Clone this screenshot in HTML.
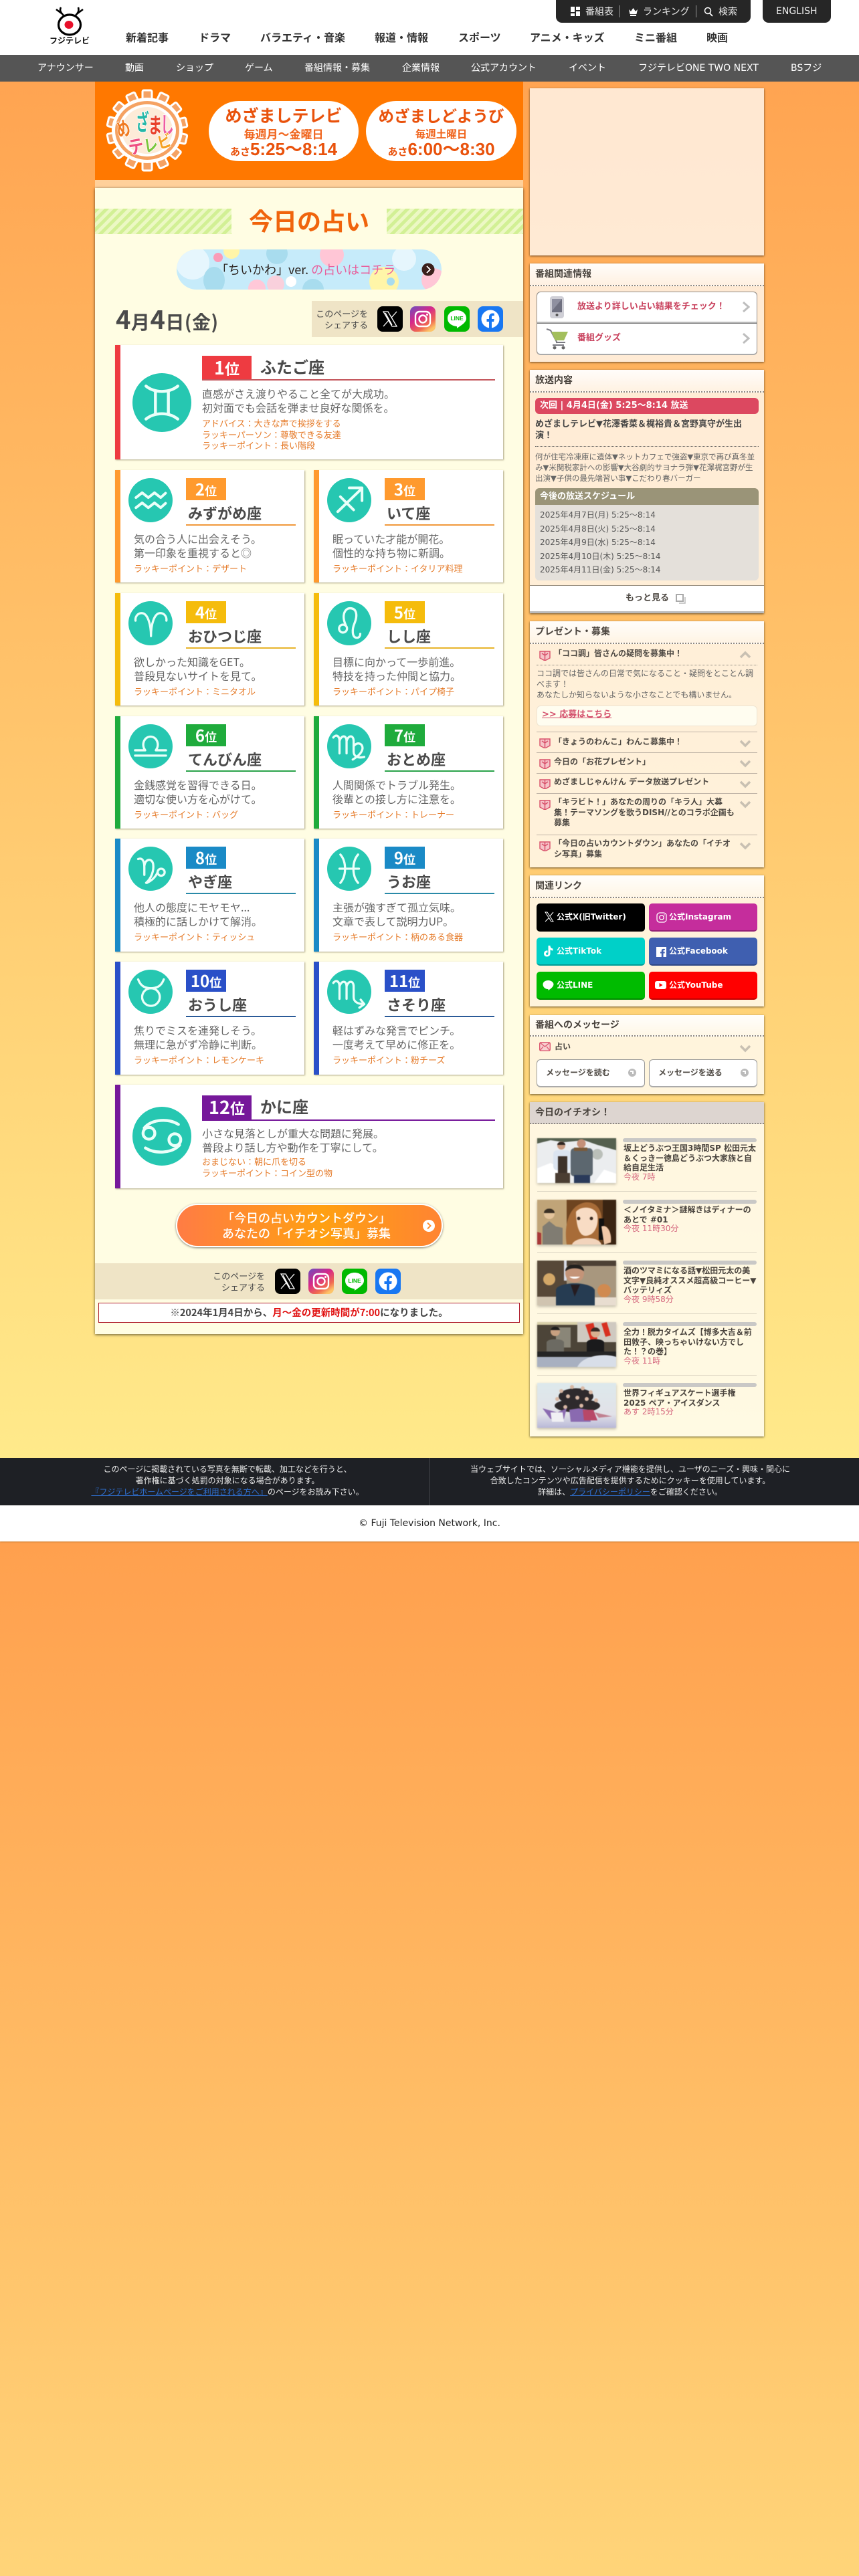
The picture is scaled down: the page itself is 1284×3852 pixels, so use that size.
<!DOCTYPE html>
<html lang="ja"><head><meta charset="utf-8"><title>今日の占い</title>
<style>
html{background:linear-gradient(#ffa04e,#ffee8e) 0 0/100% 2305px repeat-y}
body{margin:0;position:relative;width:1284px;height:3852px;overflow:hidden;font-family:"DejaVu Sans","Noto Sans CJK JP",sans-serif;color:#444}
.a,.c,.bx{position:absolute}
.a{white-space:nowrap}
.no{font-family:"Noto Sans CJK JP","DejaVu Sans",sans-serif}
.nv{top:43px;font:bold 16px/24px "Noto Sans CJK JP",sans-serif;color:#333}
.sn{top:91px;font:14px/22px "DejaVu Sans","Noto Sans CJK JP",sans-serif;color:#fff}
.tp{top:6px;font:14px/22px "Noto Sans CJK JP",sans-serif;color:#eee}
.c{background:#fff;border-left:8px solid var(--k);box-sizing:border-box;box-shadow:1px 1px 2px rgba(90,80,40,.5);font-family:"Noto Sans CJK JP",sans-serif}
.s{width:283px;height:168px}
.g{left:172px;width:580px}
.c svg{position:absolute;border-radius:50%;background:#26c7b1}
.c svg path,.c svg circle{fill:none;stroke:#eafff9;stroke-width:5;stroke-linecap:round;stroke-linejoin:round}
.s svg{left:12px;top:12px;width:66px;height:66px}
.g svg{left:18px;width:88px;height:88px}
.b{position:absolute;background:var(--k);color:#fff;text-align:center;font-weight:bold;font-size:18px}
.b i{font-style:normal;font-size:24px}
.s .b{left:98px;top:12px;width:60px;height:33px;line-height:31px}
.g .b{left:122px;top:16px;width:74px;height:35px;line-height:34px;font-size:22px}
.g .b i{font-size:27px}
.n{position:absolute;font-weight:bold;font-size:22px;line-height:30px;color:#4a4a4a;white-space:nowrap}
.s .n{left:101px;top:49px}
.g .n{left:209px;top:14px;font-size:24px;line-height:36px}
.u{position:absolute;height:2px;background:var(--u)}
.s .u{left:98px;top:81px;width:164px}
.g .u{left:122px;top:51px;width:438px}
.d{position:absolute;font-size:16px;line-height:21px;color:#666;white-space:nowrap}
.s .d{left:20px;top:92px}
.g .d{left:122px;top:62px}
.l{position:absolute;font-size:13px;line-height:16.5px;color:#e57a28;white-space:nowrap}
.s .l{left:20px;top:139px}
.g .l{left:122px;top:109px}
.bx{left:792px;width:350px;background:rgba(255,255,255,.74);box-shadow:0 1px 3px rgba(0,0,0,.6)}
.tt{position:absolute;left:0;top:0;width:350px;height:32px;border-bottom:2px dotted #8d8780;box-sizing:content-box;background:linear-gradient(rgba(255,255,255,.9),rgba(255,255,255,.3));font-size:14px;font-weight:bold;line-height:33px;text-indent:8px;color:#4a443e}
.b13{font-size:13px;font-weight:bold;line-height:16px;color:#4f4a44}
.b12{font-size:12px;font-weight:bold;line-height:16px;color:#4f4a44}
.sep{position:absolute;left:802px;width:330px;height:1px;background:#bfb3a6}
.sb{position:absolute;width:162px;height:42px;border-radius:5px;box-sizing:border-box;border-bottom:2px solid rgba(0,0,0,.25)}
.sb span{position:absolute;left:30px;top:12px;font-size:12px;font-weight:bold;line-height:16px;color:#fff;white-space:nowrap}
.sb svg{position:absolute;left:10px;top:10px}
.ms{position:absolute;top:1584px;width:162px;height:42px;border:1px solid #999;border-bottom:2px solid #aaa;border-radius:6px;background:#fff;box-sizing:border-box}
.ms span{position:absolute;left:13px;top:11px;font-size:12px;font-weight:bold;line-height:16px;color:#4f4a44;white-space:nowrap}
.ms i{position:absolute;left:136px;top:13px;width:12px;height:12px;border-radius:50%;background:#bbb}
.ms i:after{content:"";position:absolute;left:3px;top:3px;width:5px;height:5px;border-top:2px solid #fff;border-right:2px solid #fff;box-sizing:border-box}
.th{position:absolute;left:803px;width:118px;height:67px;box-shadow:0 2px 4px rgba(0,0,0,.25);filter:blur(.5px)}
.gb{position:absolute;left:931px;width:200px;height:6px;background:#c9c8c6;border-radius:3px}
.it{position:absolute;left:932px;font-size:12px;font-weight:bold;line-height:14.6px;color:#4a443e;white-space:nowrap}
.tm{position:absolute;left:932px;font-size:12px;line-height:15px;color:#d4647c;white-space:nowrap}
.hr{position:absolute;left:803px;width:328px;height:1px;background:#ddd6c4}
</style></head><body>

<!-- header -->
<div class="a" style="left:0;top:0;width:1284px;height:82px;background:#fff"></div>
<svg class="a" style="left:72px;top:8px" width="64" height="60" viewBox="0 0 64 60"><path d="M23 15C18 10 17 7 19 3M20 12 12 6M41 15C46 10 46 7 45 3M44 12 52 6" fill="none" stroke="#000" stroke-width="2.6"/><ellipse cx="32" cy="29" rx="16.5" ry="15" fill="#fff" stroke="#000" stroke-width="3.2"/><ellipse cx="31" cy="29" rx="6.5" ry="6" fill="#e8102a"/><text x="32" y="57" text-anchor="middle" font-size="12" font-weight="bold" font-family="Noto Sans CJK JP" fill="#111">フジテレビ</text></svg>
<div class="a nv" style="left:188px">新着記事</div>
<div class="a nv" style="left:297px">ドラマ</div>
<div class="a nv" style="left:389px">バラエティ・音楽</div>
<div class="a nv" style="left:560px">報道・情報</div>
<div class="a nv" style="left:685px">スポーツ</div>
<div class="a nv" style="left:792px">アニメ・キッズ</div>
<div class="a nv" style="left:948px">ミニ番組</div>
<div class="a nv" style="left:1056px">映画</div>

<div class="a" style="left:831px;top:0;width:291px;height:34px;background:#262626;border-radius:0 0 9px 9px"></div>
<div class="a" style="left:1140px;top:0;width:102px;height:34px;background:#262626;border-radius:0 0 9px 9px"></div>
<svg class="a" style="left:853px;top:10px" width="15" height="14"><path d="M0 0h6v8H0zM8 0h6v5H8zM0 10h6v4H0zM8 7h6v7H8z" fill="#fff"/></svg>
<div class="a tp" style="left:875px">番組表</div>
<div class="a" style="left:926px;top:8px;width:1px;height:18px;background:#999"></div>
<svg class="a" style="left:939px;top:11px" width="15" height="13"><path d="M1 3l3 3 3.500-5 3.500 5 3-3-1.500 7H2.500zM3 11h9v2H3z" fill="#fff"/></svg>
<div class="a tp" style="left:961px">ランキング</div>
<div class="a" style="left:1040px;top:8px;width:1px;height:18px;background:#999"></div>
<svg class="a" style="left:1052px;top:10px" width="15" height="15"><circle cx="6" cy="6" r="4.500" fill="none" stroke="#fff" stroke-width="1.500"/><path d="M9 10l4 4" stroke="#fff" stroke-width="1.800"/></svg>
<div class="a tp" style="left:1074px">検索</div>
<div class="a" style="left:1160px;top:6px;font-size:14px;line-height:22px;color:#eee">ENGLISH</div>

<div class="a" style="left:0;top:82px;width:1284px;height:40px;background:#555"></div>
<div class="a sn" style="left:56px">アナウンサー</div>
<div class="a sn" style="left:187px">動画</div>
<div class="a sn" style="left:263px">ショップ</div>
<div class="a sn" style="left:366px">ゲーム</div>
<div class="a sn" style="left:455px">番組情報・募集</div>
<div class="a sn" style="left:601px">企業情報</div>
<div class="a sn" style="left:704px">公式アカウント</div>
<div class="a sn" style="left:850px">イベント</div>
<div class="a sn" style="left:954px">フジテレビONE TWO NEXT</div>
<div class="a sn" style="left:1182px">BSフジ</div>

<!-- banner -->
<div class="a" style="left:142px;top:122px;width:640px;height:147px;background:#ff7800"></div>
<div class="a" style="left:142px;top:269px;width:640px;height:12px;background:#ffd09a"></div>
<svg class="a" style="left:153px;top:133px" width="134" height="124" viewBox="0 0 134 124">
<g fill="#f5a263" stroke="#fff" stroke-width="3">
<rect x="60" y="2" width="14" height="20" rx="2"/>
<rect x="60" y="2" width="14" height="20" rx="2" transform="rotate(26 67 62)"/>
<rect x="60" y="2" width="14" height="20" rx="2" transform="rotate(52 67 62)"/>
<rect x="60" y="2" width="14" height="20" rx="2" transform="rotate(78 67 62)"/>
<rect x="60" y="2" width="14" height="20" rx="2" transform="rotate(103 67 62)"/>
<rect x="60" y="2" width="14" height="20" rx="2" transform="rotate(129 67 62)"/>
<rect x="60" y="2" width="14" height="20" rx="2" transform="rotate(155 67 62)"/>
<rect x="60" y="2" width="14" height="20" rx="2" transform="rotate(180 67 62)"/>
<rect x="60" y="2" width="14" height="20" rx="2" transform="rotate(206 67 62)"/>
<rect x="60" y="2" width="14" height="20" rx="2" transform="rotate(232 67 62)"/>
<rect x="60" y="2" width="14" height="20" rx="2" transform="rotate(258 67 62)"/>
<rect x="60" y="2" width="14" height="20" rx="2" transform="rotate(283 67 62)"/>
<rect x="60" y="2" width="14" height="20" rx="2" transform="rotate(309 67 62)"/>
<rect x="60" y="2" width="14" height="20" rx="2" transform="rotate(335 67 62)"/>
</g>
<ellipse cx="67" cy="62" rx="53" ry="49" fill="#fff"/><ellipse cx="67" cy="62" rx="48" ry="44" fill="#f5a263"/><ellipse cx="67" cy="62" rx="43" ry="39" fill="#fff"/><ellipse cx="67" cy="62" rx="38" ry="35" fill="#fdebd8"/>
<g font-family="Noto Sans CJK JP" font-weight="bold" stroke="#fff" stroke-width="1.500" paint-order="stroke" text-anchor="middle">
<text font-size="25" fill="#f07a20" transform="translate(34 70) rotate(-15) scale(.8 1.2)">め</text>
<text font-size="26" fill="#26b8a8" transform="translate(60 62) scale(.75 1.3)">ざ</text>
<text font-size="26" fill="#e8402a" transform="translate(79 66) scale(.8 1.25)">ま</text>
<text font-size="26" fill="#ef5ca0" transform="translate(97 66) scale(.75 1.3)">し</text>
<text font-size="24" fill="#ef4f80" transform="translate(52 96) rotate(-10) scale(.95 1.15)">テ</text>
<text font-size="22" fill="#7bc63c" transform="translate(74 93) rotate(-10) scale(.95 1.15)">レ</text>
<text font-size="22" fill="#f5a020" transform="translate(95 87) rotate(-15) scale(.95 1.1)">ビ</text>
</g></svg>
<div class="a" style="left:312px;top:151px;width:224px;height:90px;border-radius:45px;background:#fff"></div>
<div class="a" style="left:547px;top:151px;width:225px;height:90px;border-radius:45px;background:#fff"></div>
<div class="a no" style="left:312px;width:224px;top:155px;text-align:center;font-size:25px;font-weight:bold;line-height:34px;color:#e9520c">めざましテレビ</div>
<div class="a no" style="left:312px;width:224px;top:188px;text-align:center;font-size:17px;font-weight:bold;line-height:24px;color:#f0641c">毎週月〜金曜日</div>
<div class="a no" style="left:312px;width:224px;top:206px;text-align:center;font-size:15px;font-weight:bold;line-height:34px;color:#e9520c">あさ<span style="font-size:26px;font-family:'Liberation Sans','Noto Sans CJK JP'">5:25〜8:14</span></div>
<div class="a no" style="left:547px;width:225px;top:155px;text-align:center;font-size:23.500px;font-weight:bold;line-height:34px;color:#e9520c">めざましどようび</div>
<div class="a no" style="left:547px;width:225px;top:188px;text-align:center;font-size:15.500px;font-weight:bold;line-height:24px;color:#f0641c">毎週土曜日</div>
<div class="a no" style="left:547px;width:225px;top:206px;text-align:center;font-size:15px;font-weight:bold;line-height:34px;color:#e9520c">あさ<span style="font-size:26px;font-family:'Liberation Sans','Noto Sans CJK JP'">6:00〜8:30</span></div>

<!-- main card -->
<div class="a" style="left:142px;top:281px;width:640px;height:1714px;background:#fffde3;box-shadow:0 1px 4px rgba(0,0,0,.6)"></div>
<div class="a" style="left:142px;top:312px;width:204px;height:38px;background:repeating-linear-gradient(135deg,#d2f095 0 5px,#ecf8c4 5px 10px)"></div>
<div class="a" style="left:578px;top:312px;width:204px;height:38px;background:repeating-linear-gradient(135deg,#d2f095 0 5px,#ecf8c4 5px 10px)"></div>
<div class="a no" style="left:142px;width:640px;top:304px;text-align:center;font-size:36px;font-weight:bold;line-height:50px;color:#f0640c">今日の占い</div>

<!-- chiikawa banner -->
<svg class="a" style="left:264px;top:373px" width="396" height="60" viewBox="0 0 396 60"><defs><clipPath id="cb"><rect width="396" height="60" rx="30"/></clipPath></defs><g clip-path="url(#cb)"><rect width="396" height="60" fill="#c6ebfa"/><circle cx="24" cy="20" r="25" fill="#e6f6fd"/><circle cx="82" cy="2" r="12" fill="#fff5a8"/><circle cx="148" cy="52" r="13" fill="#f9d0dc"/><ellipse cx="56" cy="46" rx="16" ry="20" fill="#a8dcee"/><circle cx="120" cy="58" r="13" fill="#ffc8d8"/><circle cx="204" cy="60" r="16" fill="#a8dcee"/><circle cx="232" cy="8" r="18" fill="#ffc6d6"/><circle cx="150" cy="6" r="16" fill="#a8dcee"/><circle cx="310" cy="48" r="22" fill="#fff5a8"/><circle cx="340" cy="14" r="18" fill="#e6f6fd"/><circle cx="384" cy="46" r="18" fill="#ffc6d6"/><circle cx="62" cy="12" r="7" fill="#fa9cb8"/><circle cx="320" cy="48" r="6" fill="#a8dcee"/><circle cx="171" cy="48" r="8" fill="#fff"/></g><circle cx="376" cy="30" r="9.500" fill="#3a201c"/><path d="M374 25l5 5-5 5" fill="none" stroke="#fff" stroke-width="1.800"/></svg>
<div class="a no" style="left:323px;top:388px;font-size:18px;line-height:30px;color:#2c2420">「ちいかわ」ver. <span style="color:#e8609c">の占いはコチラ</span></div>

<div class="a no" style="left:173px;top:448px;font-weight:bold;line-height:56px;color:#4a4a4a;font-size:28px;letter-spacing:.5px"><span style="font-size:38px">4</span>月<span style="font-size:38px">4</span>日(金)</div>

<div class="a" style="left:466px;top:450px;width:316px;height:54px;background:#efe4c6"></div>
<div class="a no" style="left:466px;width:84px;top:461px;text-align:right;font-size:13px;line-height:16.500px;color:#4a4a4a">このページを<br>シェアする</div>
<!-- share top -->
<svg class="a" style="left:564px;top:458px" width="38" height="38" viewBox="0 0 38 38"><rect width="38" height="38" rx="8" fill="#000"/><path d="M9 8h7l13 22h-7zM12 10l10 18M29 8 21 17M17 21 9 30" fill="none" stroke="#fff" stroke-width="1.300"/></svg>
<svg class="a" style="left:613px;top:458px" width="38" height="38" viewBox="0 0 38 38"><defs><linearGradient id="ig" x1="0" y1="0" x2=".7" y2="1"><stop offset="0" stop-color="#6a4fc0"/><stop offset=".45" stop-color="#d6288a"/><stop offset=".8" stop-color="#f06a50"/><stop offset="1" stop-color="#fdc468"/></linearGradient></defs><rect width="38" height="38" rx="8" fill="url(#ig)"/><rect x="8" y="8" width="22" height="22" rx="6" fill="none" stroke="#fff" stroke-width="2.400"/><circle cx="19" cy="19" r="5.500" fill="none" stroke="#fff" stroke-width="2.400"/><circle cx="25.500" cy="12.500" r="1.500" fill="#fff"/></svg>
<svg class="a" style="left:664px;top:458px" width="38" height="38" viewBox="0 0 38 38"><rect width="38" height="38" rx="8" fill="#00b900"/><path d="M19 6c8 0 14 5 14 12 0 7-9 11-14 15 0-2 .5-3-1-3C11 29 5 25 5 18 5 11 11 6 19 6z" fill="#fff"/><text x="19" y="21" text-anchor="middle" font-size="8.500" font-weight="bold" font-family="Liberation Sans" fill="#00b900">LINE</text></svg>
<svg class="a" style="left:714px;top:458px" width="38" height="38" viewBox="0 0 38 38"><rect width="38" height="38" rx="8" fill="#1877f2"/><circle cx="19" cy="19" r="13.500" fill="#fff"/><path d="M17 33V23h-3.500v-4H17v-3c0-3.500 2-5.500 5-5.500 1.500 0 2.800.2 2.800.2v3.300h-1.700c-1.600 0-2.100 1-2.100 2V19h3.700l-.6 4H21v10z" fill="#1877f2"/></svg>

<!-- card 1 -->
<div class="c g" style="top:516px;height:171px;--k:#ee3b41;--u:#c4565c">
<svg viewBox="0 0 100 100" style="top:42px"><path d="M23 22C38 34 62 34 77 22M23 78C38 66 62 66 77 78M39 31V69M61 31V69"/></svg>
<div class="b"><i>1</i>位</div><div class="n">ふたご座</div><div class="u"></div>
<div class="d">直感がさえ渡りやること全てが大成功。<br>初対面でも会話を弾ませ良好な関係を。</div>
<div class="l">アドバイス：大きな声で挨拶をする<br>ラッキーパーソン：尊敬できる友達<br>ラッキーポイント：長い階段</div></div>

<!-- row 1 -->
<div class="c s" style="left:172px;top:703px;--k:#ff9a2e;--u:#f0983a">
<svg viewBox="0 0 100 100"><path d="M17 44 31 33 45 44 59 33 73 44 84 34M17 67 31 56 45 67 59 56 73 67 84 57" style="stroke-width:6"/></svg>
<div class="b"><i>2</i>位</div><div class="n">みずがめ座</div><div class="u"></div>
<div class="d">気の合う人に出会えそう。<br>第一印象を重視すると◎</div><div class="l">ラッキーポイント：デザート</div></div>
<div class="c s" style="left:469px;top:703px;--k:#ff9a2e;--u:#f0983a">
<svg viewBox="0 0 100 100"><path d="M24 76 78 24M50 22H79V51M30 42 60 72" style="stroke-width:6"/></svg>
<div class="b"><i>3</i>位</div><div class="n">いて座</div><div class="u"></div>
<div class="d">眠っていた才能が開花。<br>個性的な持ち物に新調。</div><div class="l">ラッキーポイント：イタリア料理</div></div>

<!-- row 2 -->
<div class="c s" style="left:172px;top:887px;--k:#f5bc0c;--u:#e8b42a">
<svg viewBox="0 0 100 100"><path d="M51 79C51 54 44 27 30 27C20 27 15 36 16 44M51 79C51 54 58 27 72 27C82 27 87 36 86 44"/></svg>
<div class="b"><i>4</i>位</div><div class="n">おひつじ座</div><div class="u"></div>
<div class="d">欲しかった知識をGET。<br>普段見ないサイトを見て。</div><div class="l">ラッキーポイント：ミニタオル</div></div>
<div class="c s" style="left:469px;top:887px;--k:#f5bc0c;--u:#e8b42a">
<svg viewBox="0 0 100 100"><circle cx="36" cy="62" r="9"/><path d="M42 54C32 32 40 16 52 16C66 16 70 30 62 50C56 64 56 82 67 83C73 83 75 78 75 74"/></svg>
<div class="b"><i>5</i>位</div><div class="n">しし座</div><div class="u"></div>
<div class="d">目標に向かって一歩前進。<br>特技を持った仲間と協力。</div><div class="l">ラッキーポイント：パイプ椅子</div></div>

<!-- row 3 -->
<div class="c s" style="left:172px;top:1071px;--k:#1fab3c;--u:#2aa24a">
<svg viewBox="0 0 100 100"><path d="M15 71H85M15 59H38C28 46 36 28 50 28C64 28 72 46 62 59H85"/></svg>
<div class="b"><i>6</i>位</div><div class="n">てんびん座</div><div class="u"></div>
<div class="d">金銭感覚を習得できる日。<br>適切な使い方を心がけて。</div><div class="l">ラッキーポイント：バッグ</div></div>
<div class="c s" style="left:469px;top:1071px;--k:#1fab3c;--u:#2aa24a">
<svg viewBox="0 0 100 100"><path d="M14 30C20 22 28 26 28 38V66M28 38C32 24 44 24 44 38V66M44 38C48 24 60 24 60 38V62C60 72 68 78 84 74M60 50C68 38 82 44 80 56C78 66 68 74 58 80"/></svg>
<div class="b"><i>7</i>位</div><div class="n">おとめ座</div><div class="u"></div>
<div class="d">人間関係でトラブル発生。<br>後輩との接し方に注意を。</div><div class="l">ラッキーポイント：トレーナー</div></div>

<!-- row 4 -->
<div class="c s" style="left:172px;top:1254px;height:169px;--k:#1a8ac6;--u:#2a8aa8">
<svg viewBox="0 0 100 100"><circle cx="74" cy="58" r="8"/><path d="M22 28C32 24 36 34 36 46V64M36 44C38 26 54 26 56 40C58 54 52 72 40 82M66 58C60 72 50 78 42 82"/></svg>
<div class="b"><i>8</i>位</div><div class="n">やぎ座</div><div class="u"></div>
<div class="d">他人の態度にモヤモヤ...<br>積極的に話しかけて解消。</div><div class="l">ラッキーポイント：ティッシュ</div></div>
<div class="c s" style="left:469px;top:1254px;height:169px;--k:#1a8ac6;--u:#2a8aa8">
<svg viewBox="0 0 100 100"><path d="M30 18C44 34 44 66 30 82M70 18C56 34 56 66 70 82M28 50H72"/></svg>
<div class="b"><i>9</i>位</div><div class="n">うお座</div><div class="u"></div>
<div class="d">主張が強すぎて孤立気味。<br>文章で表して説明力UP。</div><div class="l">ラッキーポイント：柄のある食器</div></div>

<!-- row 5 -->
<div class="c s" style="left:172px;top:1438px;height:169px;--k:#2a50c8;--u:#2a5a98">
<svg viewBox="0 0 100 100"><circle cx="51" cy="62" r="20"/><path d="M22 22C28 38 38 42 51 42C64 42 74 38 80 22"/></svg>
<div class="b"><i>10</i>位</div><div class="n">おうし座</div><div class="u"></div>
<div class="d">焦りでミスを連発しそう。<br>無理に急がず冷静に判断。</div><div class="l">ラッキーポイント：レモンケーキ</div></div>
<div class="c s" style="left:469px;top:1438px;height:169px;--k:#2a50c8;--u:#2a5a98">
<svg viewBox="0 0 100 100"><path d="M14 30C20 22 28 26 28 38V66M28 38C32 24 44 24 44 38V66M44 38C48 24 60 24 60 38V62C60 72 68 78 84 78M76 68 84 78 73 86"/></svg>
<div class="b"><i>11</i>位</div><div class="n">さそり座</div><div class="u"></div>
<div class="d">軽はずみな発言でピンチ。<br>一度考えて早めに修正を。</div><div class="l">ラッキーポイント：粉チーズ</div></div>

<!-- card 12 -->
<div class="c g" style="top:1622px;height:155px;--k:#76189a;--u:#76189a">
<svg viewBox="0 0 100 100" style="top:33px"><circle cx="28" cy="45" r="10"/><circle cx="72" cy="56" r="10"/><path d="M20 36C34 20 62 20 78 30M80 65C66 80 38 80 22 70"/></svg>
<div class="b" style="height:36px"><i>12</i>位</div><div class="n">かに座</div><div class="u" style="top:52px"></div>
<div class="d">小さな見落としが重大な問題に発展。<br>普段より話し方や動作を丁寧にして。</div>
<div class="l" style="top:107px">おまじない：朝に爪を切る<br>ラッキーポイント：コイン型の物</div></div>

<!-- orange button -->
<div class="a" style="left:263px;top:1800px;width:399px;height:65px;box-sizing:border-box;border-radius:33px;border:2px solid #fff;background:linear-gradient(90deg,#ff7c44,#ffa012 55%,#ff8432);box-shadow:0 1px 3px rgba(0,0,0,.5)"></div>
<div class="a no" style="left:263px;width:390px;top:1810px;text-align:center;font-size:18px;line-height:23px;color:#fff;font-weight:500">「今日の占いカウントダウン」<br>あなたの「イチオシ写真」募集</div>
<svg class="a" style="left:632px;top:1824px" width="18" height="18"><circle cx="9" cy="9" r="9" fill="#fff"/><path d="M7 4.500 11.500 9 7 13.500" fill="none" stroke="#ff9030" stroke-width="2"/></svg>

<!-- bottom share -->
<div class="a" style="left:142px;top:1889px;width:640px;height:54px;background:#efe4c6"></div>
<div class="a no" style="left:296px;width:100px;top:1900px;text-align:right;font-size:13px;line-height:16.500px;color:#4a4a4a">このページを<br>シェアする</div>
<svg class="a" style="left:411px;top:1897px" width="38" height="38" viewBox="0 0 38 38"><rect width="38" height="38" rx="8" fill="#000"/><path d="M9 8h7l13 22h-7zM12 10l10 18M29 8 21 17M17 21 9 30" fill="none" stroke="#fff" stroke-width="1.300"/></svg>
<svg class="a" style="left:461px;top:1897px" width="38" height="38" viewBox="0 0 38 38"><rect width="38" height="38" rx="8" fill="url(#ig)"/><rect x="8" y="8" width="22" height="22" rx="6" fill="none" stroke="#fff" stroke-width="2.400"/><circle cx="19" cy="19" r="5.500" fill="none" stroke="#fff" stroke-width="2.400"/><circle cx="25.500" cy="12.500" r="1.500" fill="#fff"/></svg>
<svg class="a" style="left:511px;top:1897px" width="38" height="38" viewBox="0 0 38 38"><rect width="38" height="38" rx="8" fill="#00b900"/><path d="M19 6c8 0 14 5 14 12 0 7-9 11-14 15 0-2 .5-3-1-3C11 29 5 25 5 18 5 11 11 6 19 6z" fill="#fff"/><text x="19" y="21" text-anchor="middle" font-size="8.500" font-weight="bold" font-family="Liberation Sans" fill="#00b900">LINE</text></svg>
<svg class="a" style="left:561px;top:1897px" width="38" height="38" viewBox="0 0 38 38"><rect width="38" height="38" rx="8" fill="#1877f2"/><circle cx="19" cy="19" r="13.500" fill="#fff"/><path d="M17 33V23h-3.500v-4H17v-3c0-3.500 2-5.500 5-5.500 1.500 0 2.800.2 2.800.2v3.300h-1.700c-1.600 0-2.100 1-2.100 2V19h3.700l-.6 4H21v10z" fill="#1877f2"/></svg>
<div class="a no" style="left:147px;top:1948px;width:630px;height:30px;box-sizing:border-box;border:1px solid #b02030;background:#fff;text-align:center;font-size:14.500px;font-weight:bold;line-height:28px;color:#444">※2024年1月4日から、<span style="color:#e01010">月〜金の更新時間が7:00</span>になりました。</div>

<!-- sidebar -->
<div class="bx" style="top:132px;height:250px"></div>

<div class="bx" style="top:394px;height:147px"><div class="tt">番組関連情報</div></div>
<div class="a" style="left:802px;top:436px;width:330px;height:95px;box-sizing:border-box;background:#fff;border:1px solid #8f8a85;border-bottom:2px solid #aaa;border-radius:6px"></div>
<div class="a" style="left:803px;top:481px;width:328px;height:3px;background:#b8b8b8;border-bottom:1px solid #777;box-sizing:border-box"></div>
<svg class="a" style="left:822px;top:443px" width="21" height="33" viewBox="0 0 21 33"><rect width="21" height="33" rx="4" fill="#cfcfd6"/><rect x="3" y="4" width="15" height="20" fill="#6f7080"/><path d="M3 4h15L3 22z" fill="#8f90a0"/><circle cx="10.500" cy="28" r="2" fill="#555"/></svg>
<div class="a" style="left:863px;top:451px;font-size:13px;font-weight:bold;line-height:16px;color:#c8405c">放送より詳しい占い結果をチェック！</div>
<svg class="a" style="left:1109px;top:450px" width="12" height="18"><path d="M2 2l8 7-8 7" fill="none" stroke="#bdbdbd" stroke-width="3"/></svg>
<svg class="a" style="left:816px;top:491px" width="34" height="32" viewBox="0 0 34 32"><path d="M1 1 7 3 17 22" fill="none" stroke="#7a7a82" stroke-width="2"/><path d="M8 5H33L27 18H14z" fill="#a3bf5c"/><path d="M15 21h14" stroke="#7a7a82" stroke-width="2"/><rect x="10" y="24" width="17" height="2" fill="#7a7a82"/><circle cx="13" cy="29" r="2.500" fill="#666"/><circle cx="26" cy="29" r="2.500" fill="#666"/></svg>
<div class="a" style="left:863px;top:498px;font-size:13px;font-weight:bold;line-height:16px;color:#c8405c">番組グッズ</div>
<svg class="a" style="left:1109px;top:497px" width="12" height="18"><path d="M2 2l8 7-8 7" fill="none" stroke="#bdbdbd" stroke-width="3"/></svg>

<div class="bx" style="top:553px;height:364px"><div class="tt">放送内容</div></div>
<div class="a" style="left:800px;top:595px;width:334px;height:24px;border-radius:6px;background:#dc4860"></div>
<div class="a" style="left:807px;top:599px;font-size:13px;font-weight:bold;line-height:16px;color:#fff">次回 | 4月4日(金) 5:25〜8:14 放送</div>
<div class="a b13" style="left:800px;top:626px;line-height:17px;color:#444">めざましテレビ▼花澤香菜＆梶裕貴＆宮野真守が生出<br>演！</div>
<div class="a" style="left:800px;top:667px;width:334px;border-top:1px dotted #555"></div>
<div class="a" style="left:800px;top:675px;font-size:11.500px;line-height:16px;color:#666">何が住宅冷凍庫に遺体▼ネットカフェで強盗▼東京で再び真冬並<br>み▼米関税家計への影響▼大谷劇的サヨナラ弾▼花澤梶宮野が生<br>出演▼子供の最先端習い事▼こだわり春バーガー</div>
<div class="a" style="left:800px;top:730px;width:334px;height:25px;border-radius:6px 6px 0 0;background:#9a9478"></div>
<div class="a" style="left:807px;top:735px;font-size:13px;font-weight:bold;line-height:16px;color:#fff">今後の放送スケジュール</div>
<div class="a" style="left:800px;top:755px;width:334px;height:113px;border-radius:0 0 6px 6px;background:#e4e0da"></div>
<div class="a" style="left:807px;top:760px;font-size:12px;line-height:20.500px;color:#555">2025年4月7日(月) 5:25〜8:14<br>2025年4月8日(火) 5:25〜8:14<br>2025年4月9日(水) 5:25〜8:14<br>2025年4月10日(木) 5:25〜8:14<br>2025年4月11日(金) 5:25〜8:14</div>
<div class="a" style="left:792px;top:875px;width:350px;height:42px;box-sizing:border-box;background:#fff;border-top:1px solid #9a9080;border-bottom:3px solid #bbb"></div>
<div class="a b13" style="left:935px;top:887px">もっと見る</div>
<svg class="a" style="left:1010px;top:888px" width="16" height="15"><rect x="1" y="1" width="10" height="10" fill="#fff" stroke="#aaa" stroke-width="2"/><path d="M14 5v9H5" fill="none" stroke="#bbb" stroke-width="1.500"/></svg>

<div class="bx" style="top:929px;height:368px"><div class="tt">プレゼント・募集</div></div>
<div class="a" style="left:802px;top:994px;width:330px;border-top:1px dotted #8d8780"></div>
<!-- gift icons -->
<svg class="a" style="left:806px;top:971px" width="17" height="17" viewBox="0 0 17 17"><path d="M1 3h15v10l-7.500 4L1 13z" fill="#f6c4c8" stroke="#d8506a" stroke-width="1.400"/><path d="M8.500 3v13M4 6l4.500 3L13 6" fill="none" stroke="#d8506a" stroke-width="1.500"/></svg>
<svg class="a" style="left:806px;top:1102px" width="17" height="17" viewBox="0 0 17 17"><path d="M1 3h15v10l-7.500 4L1 13z" fill="#f6c4c8" stroke="#d8506a" stroke-width="1.400"/><path d="M8.500 3v13M4 6l4.500 3L13 6" fill="none" stroke="#d8506a" stroke-width="1.500"/></svg>
<svg class="a" style="left:806px;top:1133px" width="17" height="17" viewBox="0 0 17 17"><path d="M1 3h15v10l-7.500 4L1 13z" fill="#f6c4c8" stroke="#d8506a" stroke-width="1.400"/><path d="M8.500 3v13M4 6l4.500 3L13 6" fill="none" stroke="#d8506a" stroke-width="1.500"/></svg>
<svg class="a" style="left:806px;top:1163px" width="17" height="17" viewBox="0 0 17 17"><path d="M1 3h15v10l-7.500 4L1 13z" fill="#f6c4c8" stroke="#d8506a" stroke-width="1.400"/><path d="M8.500 3v13M4 6l4.500 3L13 6" fill="none" stroke="#d8506a" stroke-width="1.500"/></svg>
<svg class="a" style="left:806px;top:1194px" width="17" height="17" viewBox="0 0 17 17"><path d="M1 3h15v10l-7.500 4L1 13z" fill="#f6c4c8" stroke="#d8506a" stroke-width="1.400"/><path d="M8.500 3v13M4 6l4.500 3L13 6" fill="none" stroke="#d8506a" stroke-width="1.500"/></svg>
<svg class="a" style="left:806px;top:1256px" width="17" height="17" viewBox="0 0 17 17"><path d="M1 3h15v10l-7.500 4L1 13z" fill="#f6c4c8" stroke="#d8506a" stroke-width="1.400"/><path d="M8.500 3v13M4 6l4.500 3L13 6" fill="none" stroke="#d8506a" stroke-width="1.500"/></svg>
<!-- chevrons -->
<svg class="a" style="left:1105px;top:973px" width="18" height="12"><path d="M2 10l7-7 7 7" fill="none" stroke="#c8c0b2" stroke-width="3.500"/></svg>
<svg class="a" style="left:1105px;top:1106px" width="18" height="12"><path d="M2 2l7 7 7-7" fill="none" stroke="#c8c0b2" stroke-width="3.500"/></svg>
<svg class="a" style="left:1105px;top:1136px" width="18" height="12"><path d="M2 2l7 7 7-7" fill="none" stroke="#c8c0b2" stroke-width="3.500"/></svg>
<svg class="a" style="left:1105px;top:1167px" width="18" height="12"><path d="M2 2l7 7 7-7" fill="none" stroke="#c8c0b2" stroke-width="3.500"/></svg>
<svg class="a" style="left:1105px;top:1197px" width="18" height="12"><path d="M2 2l7 7 7-7" fill="none" stroke="#c8c0b2" stroke-width="3.500"/></svg>
<svg class="a" style="left:1105px;top:1259px" width="18" height="12"><path d="M2 2l7 7 7-7" fill="none" stroke="#c8c0b2" stroke-width="3.500"/></svg>
<div class="a b12" style="left:828px;top:969px">「ココ調」皆さんの疑問を募集中！</div>
<div class="a" style="left:802px;top:1000px;font-size:12px;line-height:15.800px;color:#666">ココ調では皆さんの日常で気になること・疑問をとことん調<br>べます！<br>あなたしか知らないような小さなことでも構いません。</div>
<div class="a" style="left:802px;top:1055px;width:330px;height:31px;box-sizing:border-box;background:#fffdf0;border:1px solid #eee3d0;border-radius:6px"></div>
<div class="a" style="left:810px;top:1061px;font-size:13px;font-weight:bold;line-height:16px;color:#d4506c;text-decoration:underline">&gt;&gt; 応募はこちら</div>
<div class="sep" style="top:1094px"></div>
<div class="a b12" style="left:828px;top:1101px">「きょうのわんこ」わんこ募集中！</div>
<div class="sep" style="top:1125px"></div>
<div class="a b12" style="left:828px;top:1131px">今日の「お花プレゼント」</div>
<div class="sep" style="top:1156px"></div>
<div class="a b12" style="left:828px;top:1161px">めざましじゃんけん データ放送プレゼント</div>
<div class="sep" style="top:1186px"></div>
<div class="a b12" style="left:828px;top:1192px;line-height:15.500px">「キラビト！」あなたの周りの「キラ人」大募<br>集！テーマソングを歌うDISH//とのコラボ企画も<br>募集</div>
<div class="sep" style="top:1248px"></div>
<div class="a b12" style="left:828px;top:1254px;line-height:15.500px">「今日の占いカウントダウン」あなたの「イチオ<br>シ写真」募集</div>

<div class="bx" style="top:1309px;height:196px"><div class="tt">関連リンク</div></div>
<div class="sb" style="left:802px;top:1351px;background:#000"><svg width="14" height="18" viewBox="0 0 14 18" style="left:12px;top:11px"><path d="M1 2h3l9 14h-3zM13 2 8 8M6 11 1 16" fill="none" stroke="#fff" stroke-width="1"/></svg><span>公式X(旧Twitter)</span></div>
<div class="sb" style="left:970px;top:1351px;background:#c52d9c"><svg width="16" height="16" viewBox="0 0 16 16" style="left:11px;top:13px"><rect x="1" y="1" width="14" height="14" rx="4" fill="none" stroke="#fff" stroke-width="1.300"/><circle cx="8" cy="8" r="3.200" fill="none" stroke="#fff" stroke-width="1.300"/><circle cx="12" cy="4" r=".8" fill="#fff"/></svg><span>公式Instagram</span></div>
<div class="sb" style="left:802px;top:1402px;background:#00d0c8"><svg width="15" height="18" viewBox="0 0 15 18" style="left:10px;top:11px"><path d="M7.500 1h3c0 3 2 4.500 4 4.500v3c-1.500 0-3-.5-4-1.500v6c0 3-2.500 4.500-5 4.500S1 16 1 13c0-3 2.500-5 5.500-4.500v3C5 11 4 12 4 13s.7 2 1.800 2 1.700-1 1.700-2z" fill="#fff"/></svg><span>公式TikTok</span></div>
<div class="sb" style="left:970px;top:1402px;background:#3f5fb0"><svg width="15" height="15" viewBox="0 0 15 15" style="left:11px;top:14px"><path d="M0 0h15v15h-4.500V9.500h2l.3-2.300h-2.300V6c0-.7.200-1 1-1h1.300V3c-.5 0-1-.1-1.800-.1C8.500 2.900 7.800 4 7.800 5.700v1.500H6V9.500h1.800V15H0z" fill="#fff"/></svg><span>公式Facebook</span></div>
<div class="sb" style="left:802px;top:1453px;background:#00bb00"><svg width="17" height="17" viewBox="0 0 17 17" style="left:9px;top:12px"><path d="M8.500 1c4 0 8 2.500 8 6s-5 7-8 9c0-1 .3-2-.8-2C4 14 .5 11 .5 7s4-6 8-6z" fill="#fff"/></svg><span>公式LINE</span></div>
<div class="sb" style="left:970px;top:1453px;background:#ff0000"><svg width="17" height="12" viewBox="0 0 17 12" style="left:9px;top:14px"><rect width="17" height="12" rx="3" fill="#fff"/><path d="M6.500 3v6l5-3z" fill="#f00"/></svg><span>公式YouTube</span></div>

<div class="bx" style="top:1518px;height:118px"><div class="tt" style="height:30px;line-height:30px">番組へのメッセージ</div></div>
<svg class="a" style="left:806px;top:1558px" width="17" height="14" viewBox="0 0 17 14"><rect x=".7" y=".7" width="15.600" height="12.600" rx="2" fill="#f8d0d0" stroke="#dc5870" stroke-width="1.400"/><path d="M1 1l7.500 6L16 1M1 13l5-6M16 13l-5-6" fill="none" stroke="#dc5870" stroke-width="1.300"/></svg>
<div class="a b12" style="left:829px;top:1557px">占い</div>
<svg class="a" style="left:1105px;top:1562px" width="18" height="12"><path d="M2 2l7 7 7-7" fill="none" stroke="#c8c0b2" stroke-width="3.500"/></svg>
<div class="ms" style="left:802px"><span>メッセージを読む</span><i></i></div>
<div class="ms" style="left:970px"><span>メッセージを送る</span><i></i></div>

<div class="bx" style="top:1648px;height:500px;background:rgba(255,255,255,.76)"><div class="tt" style="background:#ddd5d0;height:31px;line-height:33px;color:#4a443e">今日のイチオシ！</div></div>

<svg class="th" style="top:1702px" viewBox="0 0 118 67"><rect width="118" height="67" fill="#ebedef"/><path d="M0 0H118V18L90 10 70 3 40 6 20 3 0 8z" fill="#55604f"/><path d="M0 45l20-8 22 12v18H0zM85 67l15-20 18 6v14z" fill="#fff"/><circle cx="90" cy="24" r="8" fill="#8a9284" opacity=".5"/><rect x="24" y="18" width="26" height="30" rx="6" fill="#dbe4f0"/><rect x="31" y="27" width="14" height="40" fill="#3d322a"/><rect x="27" y="52" width="22" height="15" fill="#4a3d32"/><circle cx="36" cy="11" r="6" fill="#c89a80"/><path d="M30 10c0-6 12-6 12 0z" fill="#2c2420"/><rect x="50" y="15" width="33" height="42" rx="5" fill="#5c676f"/><rect x="55" y="14" width="20" height="5" fill="#7a5a38"/><rect x="55" y="55" width="24" height="12" fill="#2a3a5a"/><circle cx="66" cy="8" r="6.500" fill="#c49078"/></svg>
<div class="gb" style="top:1702px"></div>
<div class="it" style="top:1710px">坂上どうぶつ王国3時間SP 松田元太<br>＆くっきー徳島どうぶつ大家族と自<br>給自足生活</div><div class="tm" style="top:1753px">今夜 7時</div>
<div class="hr" style="top:1781px"></div>

<svg class="th" style="top:1794px" viewBox="0 0 118 67"><rect width="118" height="67" fill="#6e4420"/><rect width="44" height="67" fill="#c0a478"/><rect x="98" width="20" height="67" fill="#3a2412"/><path d="M8 67V40l10-8 10 8 10 2V67z" fill="#807c72"/><circle cx="18" cy="21" r="8" fill="#e4c49c"/><path d="M10 20c0-9 16-9 16 0z" fill="#3a3024"/><path d="M0 48l6 2v17H0z" fill="#a83838"/><path d="M44 67C40 40 46 8 72 4c18-2 26 14 24 30l-4 33z" fill="#a86c38"/><path d="M58 18c8-10 30-8 32 6 2 14-4 30-18 30-10 0-14-18-14-36z" fill="#f8dcc4"/><path d="M52 67c4-12 40-14 44 0z" fill="#f2d4bc"/><circle cx="62" cy="28" r="2.500" fill="#3a2a20"/><circle cx="81" cy="28" r="2.500" fill="#3a2a20"/><rect x="92" y="28" width="8" height="32" fill="#111"/><path d="M96 40c8-4 16 8 14 24l-10 3z" fill="#f0c8a8"/></svg>
<div class="gb" style="top:1794px"></div>
<div class="it" style="top:1802px">＜ノイタミナ＞謎解きはディナーの<br>あとで #01</div><div class="tm" style="top:1830px">今夜 11時30分</div>
<div class="hr" style="top:1872px"></div>

<svg class="th" style="top:1885px" viewBox="0 0 118 67"><rect width="118" height="67" fill="#a8977e"/><rect width="118" height="8" fill="#4c4034"/><rect width="44" height="67" fill="#574838"/><rect x="40" width="4" height="30" fill="#d8dce8"/><circle cx="18" cy="28" r="9" fill="#d4a868"/><rect x="0" y="54" width="44" height="13" fill="#d0c4b0"/><circle cx="100" cy="45" r="10" fill="#d08a50"/><rect x="44" y="55" width="74" height="12" fill="#e8ddd0"/><path d="M28 67V44c0-6 14-10 28-10s28 4 30 10v23z" fill="#263c52"/><path d="M50 36l6 18 8-18z" fill="#251c20"/><circle cx="56" cy="19" r="14" fill="#c49478"/><path d="M42 16c0-14 28-14 28 0-8-6-20-6-28 0z" fill="#22201e"/><path d="M48 24c4 4 12 4 16 0z" fill="#fff"/></svg>
<div class="gb" style="top:1885px"></div>
<div class="it" style="top:1893px">酒のツマミになる話▼松田元太の美<br>文字▼良純オススメ超高級コーヒー▼<br>バッテリィズ</div><div class="tm" style="top:1936px">今夜 9時58分</div>
<div class="hr" style="top:1964px"></div>

<svg class="th" style="top:1977px" viewBox="0 0 118 67"><rect width="118" height="67" fill="#4c4438"/><rect x="60" width="58" height="30" fill="#cfc9c0"/><path d="M72 4l12-3 6 24-10 3zM96 2l8-2 6 20-8 2z" fill="#d83020"/><rect y="0" width="60" height="4" fill="#d8cfa8"/><rect x="28" y="8" width="22" height="30" fill="#8a8678"/><path d="M14 46V30c2-6 24-6 26 0v16z" fill="#6c6a62"/><circle cx="27" cy="14" r="7" fill="#c8a080"/><path d="M20 12c2-7 12-7 14 0z" fill="#1c1c1c"/><path d="M74 46V30c2-6 24-6 26 0v16z" fill="#1a1a1c"/><circle cx="87" cy="16" r="7" fill="#d8b090"/><path d="M80 14c1-8 13-8 14 0z" fill="#362a24"/><rect y="44" width="118" height="8" fill="#242424"/><rect y="52" width="118" height="15" fill="#a8b0c0"/><path d="M60 67C68 50 100 46 118 52V67z" fill="#d8dee8"/></svg>
<div class="gb" style="top:1977px"></div>
<div class="it" style="top:1985px">全力！脱力タイムズ【博多大吉＆前<br>田敦子、映っちゃいけない方でし<br>た！？の巻】</div><div class="tm" style="top:2028px">今夜 11時</div>
<div class="hr" style="top:2056px"></div>

<svg class="th" style="top:2068px" viewBox="0 0 118 67"><defs><linearGradient id="bg5" x1="0" y1="0" x2="0" y2="1"><stop offset="0" stop-color="#dde9ec"/><stop offset=".7" stop-color="#e2e2e8"/><stop offset="1" stop-color="#b8b8d8"/></linearGradient></defs><rect width="118" height="67" fill="url(#bg5)"/><g fill="#2e2a2c"><ellipse cx="58" cy="20" rx="26" ry="12"/><ellipse cx="60" cy="34" rx="34" ry="10"/></g><g fill="#d8b8a4"><circle cx="36" cy="12" r="3"/><circle cx="52" cy="6" r="3"/><circle cx="68" cy="8" r="3"/><circle cx="80" cy="14" r="3"/><circle cx="30" cy="24" r="3"/><circle cx="46" cy="20" r="3"/><circle cx="60" cy="22" r="3"/><circle cx="74" cy="24" r="3"/><circle cx="88" cy="26" r="3"/><circle cx="42" cy="36" r="3"/><circle cx="66" cy="34" r="3"/></g><path d="M8 38 30 44 44 38 40 54H20zM48 40l14-2 14 2 4 18H50z" fill="#8a6ab0"/><path d="M68 40h16l6 16H70z" fill="#b84868"/><path d="M20 44h18l2 14H22z" fill="#f0f0f4"/><path d="M86 44l26 6-20 2z" fill="#c08090"/></svg>
<div class="gb" style="top:2068px"></div>
<div class="it" style="top:2076px">世界フィギュアスケート選手権<br>2025 ペア・アイスダンス</div><div class="tm" style="top:2104px">あす 2時15分</div>

<!-- footer -->
<div class="a" style="left:0;top:2180px;width:1284px;height:71px;background:#1e2025"></div>
<div class="a" style="left:641px;top:2180px;width:1px;height:71px;background:#44464a"></div>
<div class="a" style="left:40px;width:600px;top:2189px;text-align:center;font-size:12px;line-height:17px;color:#ececec">このページに掲載されている写真を無断で転載、加工などを行うと、<br>著作権に基づく処罰の対象になる場合があります。<br><span style="color:#2f6fd0;text-decoration:underline">『フジテレビホームページをご利用される方へ』</span>のページをお読み下さい。</div>
<div class="a" style="left:642px;width:600px;top:2189px;text-align:center;font-size:12px;line-height:17px;color:#ececec">当ウェブサイトでは、ソーシャルメディア機能を提供し、ユーザのニーズ・興味・関心に<br>合致したコンテンツや広告配信を提供するためにクッキーを使用しています。<br>詳細は、<span style="color:#2f6fd0;text-decoration:underline">プライバシーポリシー</span>をご確認ください。</div>
<div class="a" style="left:0;top:2251px;width:1284px;height:54px;background:#fff;box-shadow:0 1px 2px rgba(120,70,20,.4)"></div>
<div class="a" style="left:0;width:1284px;top:2268px;text-align:center;font-size:14px;line-height:20px;color:#222">© Fuji Television Network, Inc.</div>
</body></html>
